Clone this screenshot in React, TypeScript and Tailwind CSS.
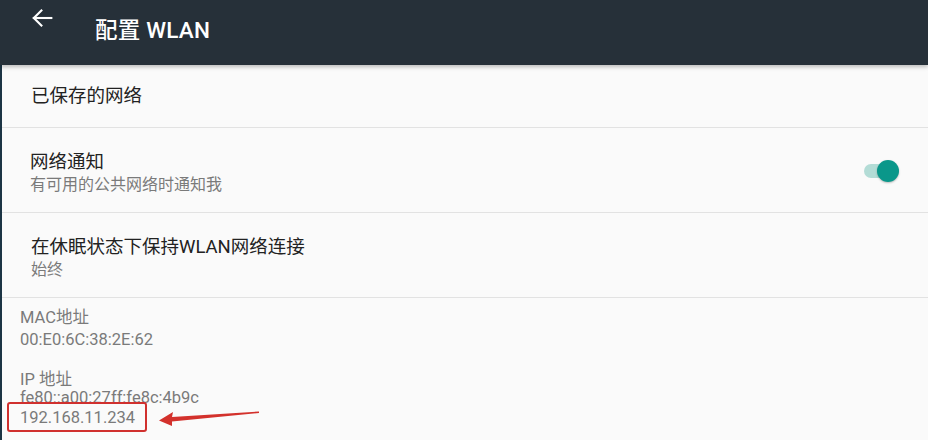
import React from "react";

const font = { fontFamily: '"Roboto", "Noto Sans CJK SC", sans-serif' };

export default function App() {
  return (
    <div className="w-[928px] h-[440px] overflow-hidden bg-[#fafafa] relative" style={font}>
      <div className="h-[65px] bg-[#263039] flex items-start relative z-10 shadow-[0_2px_4px_rgba(0,0,0,0.25)]">
        <div className="w-[95px] pl-[28px] pt-[4px]">
          <svg width="28" height="28" viewBox="0 0 24 24" fill="none" stroke="#ffffff" strokeWidth="1.8">
            <path d="M20 12H5" strokeLinecap="square" />
            <path d="M11.5 5.5L5 12l6.5 6.5" strokeLinecap="square" />
          </svg>
        </div>
        <div className="pt-[14px] text-white text-[22.5px] font-medium tracking-[0.2px]">配置 WLAN</div>
      </div>
      <div className="absolute left-0 top-[65px] bottom-0 w-[2px] bg-[#1c3444]" />

      <div className="h-[63px] flex items-center pl-[31px] border-b border-[#e2e2e2]">
        <div className="text-[18.5px] text-[#222] pt-[2px]">已保存的网络</div>
      </div>

      <div className="h-[85px] flex items-center justify-between pl-[30px] pr-[28px] border-b border-[#e2e2e2]">
        <div className="flex flex-col pt-[5px]">
          <div className="text-[18.5px] text-[#222] leading-[24px]">网络通知</div>
          <div className="text-[16px] text-[#7a7a7a] leading-[22px]">有可用的公共网络时通知我</div>
        </div>
        <div className="relative w-[36px] h-[22px] flex items-center mt-[2px]">
          <div className="absolute left-[0px] w-[30px] h-[14px] rounded-full bg-[#b3dcd6]" />
          <div className="absolute left-[13px] w-[22px] h-[22px] rounded-full bg-[#0a978a] shadow-[0_1px_2px_rgba(0,0,0,0.25)]" />
        </div>
      </div>

      <div className="h-[85px] flex items-center pl-[31px] border-b border-[#e2e2e2]">
        <div className="flex flex-col pt-[5px]">
          <div className="text-[18.5px] text-[#222] leading-[24px]">在休眠状态下保持WLAN网络连接</div>
          <div className="text-[16px] text-[#7a7a7a] leading-[22px]">始终</div>
        </div>
      </div>

      <div className="pl-[20px] pt-[9px] text-[16.5px] text-[#7a7a7a] leading-[22px]">
        <div>MAC地址</div>
        <div>00:E0:6C:38:2E:62</div>
        <div className="mt-[19px] leading-[19px]">IP 地址</div>
        <div className="leading-[18px]">fe80::a00:27ff:fe8c:4b9c</div>
        <div className="relative inline-block leading-[19px]">
          <span>192.168.11.234</span>
          <div className="absolute left-[-13px] top-[-6px] w-[140px] h-[30px] border-2 border-[#d0302e] rounded-[3px]" />
        </div>
      </div>

      <svg className="absolute left-[155px] top-[405px]" width="110" height="24" viewBox="0 0 110 24">
        <polygon points="4,15.5 18,7 17,12 104,6.5 104,8 17,16.5 17,21" fill="#d3312c" />
      </svg>
    </div>
  );
}
